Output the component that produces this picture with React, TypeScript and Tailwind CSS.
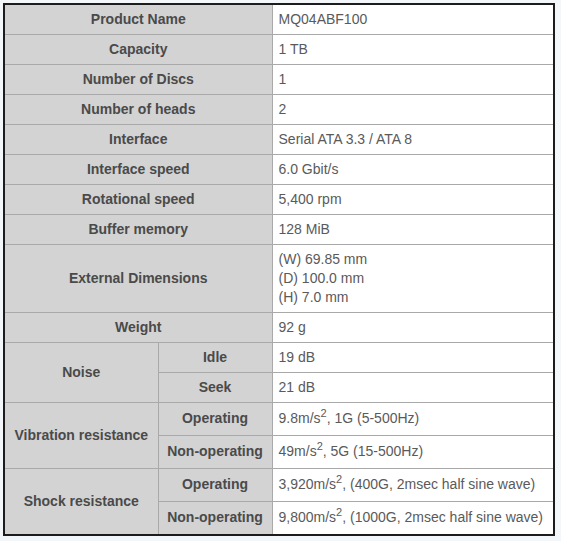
const rows: { label: string; value: React.ReactNode }[] = [
  { label: 'Product Name', value: 'MQ04ABF100' },
  { label: 'Capacity', value: '1 TB' },
  { label: 'Number of Discs', value: '1' },
  { label: 'Number of heads', value: '2' },
  { label: 'Interface', value: 'Serial ATA 3.3 / ATA 8' },
  { label: 'Interface speed', value: '6.0 Gbit/s' },
  { label: 'Rotational speed', value: '5,400 rpm' },
  { label: 'Buffer memory', value: '128 MiB' },
]

const head = 'bg-[#d3d3d3] text-[#4a4a4a] font-bold text-center border border-[#a9a9a9] px-1'
const cell = 'bg-white text-[#5a5a5a] border border-[#a9a9a9] pl-[6px] pr-1'

function Sq() {
  return <sup className="text-[11px] leading-none relative -top-[6px] align-baseline">2</sup>
}

export default function App() {
  return (
    <div className="min-h-[541px] bg-[#f4f7fa] pt-[3px] pl-[3px]">
      <div className="w-[552px] border-2 border-[#1c1c1c] bg-white">
        <table
          className="w-full table-fixed border-collapse text-[14px] leading-[19px] border-hidden"
          style={{ fontFamily: '"Liberation Sans", Arial, sans-serif' }}
        >
          <colgroup>
            <col className="w-[153px]" />
            <col className="w-[114px]" />
            <col />
          </colgroup>
          <tbody>
            {rows.map((r, i) => (
              <tr key={r.label} className={i === 0 ? 'h-[29px]' : 'h-[30px]'}>
                <th colSpan={2} className={head}>{r.label}</th>
                <td className={cell}>{r.value}</td>
              </tr>
            ))}
            <tr className="h-[68px]">
              <th colSpan={2} className={head}>External Dimensions</th>
              <td className={cell}>
                (W) 69.85 mm<br />(D) 100.0 mm<br />(H) 7.0 mm
              </td>
            </tr>
            <tr className="h-[30px]">
              <th colSpan={2} className={head}>Weight</th>
              <td className={cell}>92 g</td>
            </tr>
            <tr className="h-[30px]">
              <th rowSpan={2} className={head}>Noise</th>
              <th className={head}>Idle</th>
              <td className={cell}>19 dB</td>
            </tr>
            <tr className="h-[30px]">
              <th className={head}>Seek</th>
              <td className={cell}>21 dB</td>
            </tr>
            <tr className="h-[33px]">
              <th rowSpan={2} className={head}>Vibration resistance</th>
              <th className={head}>Operating</th>
              <td className={cell}>9.8m/s<Sq />, 1G (5-500Hz)</td>
            </tr>
            <tr className="h-[33px]">
              <th className={head}>Non-operating</th>
              <td className={cell}>49m/s<Sq />, 5G (15-500Hz)</td>
            </tr>
            <tr className="h-[33px]">
              <th rowSpan={2} className={head}>Shock resistance</th>
              <th className={head}>Operating</th>
              <td className={cell}>3,920m/s<Sq />, (400G, 2msec half sine wave)</td>
            </tr>
            <tr className="h-[33px]">
              <th className={head}>Non-operating</th>
              <td className={cell}>9,800m/s<Sq />, (1000G, 2msec half sine wave)</td>
            </tr>
          </tbody>
        </table>
      </div>
    </div>
  )
}
